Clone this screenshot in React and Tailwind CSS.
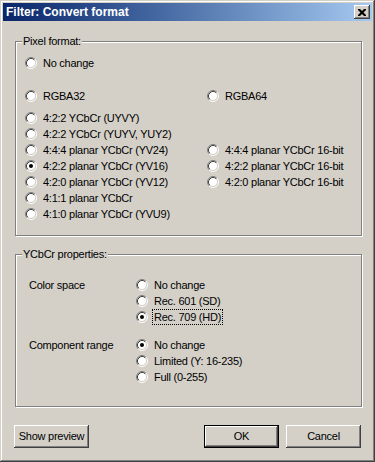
import React from "react";

const bevel =
  "shadow-[inset_-1px_-1px_#404040,inset_1px_1px_#ffffff,inset_-2px_-2px_#808080,inset_2px_2px_#d4d0c8]";

function Radio({ checked }) {
  return (
    <svg width="13" height="12" viewBox="0 0 13 12" className="shrink-0">
      <circle cx="6" cy="6" r="4.5" fill="#ffffff" />
      <path d="M2.11 9.89 A5.5 5.5 0 0 1 9.89 2.11" fill="none" stroke="#808080" />
      <path d="M9.89 2.11 A5.5 5.5 0 0 1 2.11 9.89" fill="none" stroke="#ffffff" />
      <path d="M2.82 9.18 A4.5 4.5 0 0 1 9.18 2.82" fill="none" stroke="#404040" />
      <path d="M9.18 2.82 A4.5 4.5 0 0 1 2.82 9.18" fill="none" stroke="#d4d0c8" />
      {checked && <circle cx="6" cy="6" r="2" fill="#000000" />}
    </svg>
  );
}

function Option({ label, checked, focused }) {
  return (
    <div className="flex items-center h-[16px] gap-[3px]">
      <Radio checked={checked} />
      <span
        className={
          focused
            ? "leading-[14px] px-[1px] border border-dotted border-black"
            : "leading-[14px] px-[1px] border border-transparent"
        }
      >
        {label}
      </span>
    </div>
  );
}

function Group({ title, className, children }) {
  return (
    <div
      className={
        "relative border border-[#808080] shadow-[1px_1px_0_#ffffff,inset_1px_1px_0_#ffffff] " +
        className
      }
    >
      <span className="absolute -top-[8px] left-[6px] bg-[#d4d0c8] px-[1px] leading-[14px]">
        {title}
      </span>
      {children}
    </div>
  );
}

function Button({ children, isDefault, className }) {
  return (
    <button
      className={
        "h-[23px] w-[75px] bg-[#d4d0c8] text-black text-[11px] " +
        (isDefault ? "border border-black " : "") +
        bevel +
        " " +
        (className || "")
      }
    >
      {children}
    </button>
  );
}

export default function App() {
  const rows = [
    ["4:2:2 YCbCr (UYVY)", null],
    ["4:2:2 YCbCr (YUYV, YUY2)", null],
    ["4:4:4 planar YCbCr (YV24)", "4:4:4 planar YCbCr 16-bit"],
    ["4:2:2 planar YCbCr (YV16)", "4:2:2 planar YCbCr 16-bit"],
    ["4:2:0 planar YCbCr (YV12)", "4:2:0 planar YCbCr 16-bit"],
    ["4:1:1 planar YCbCr", null],
    ["4:1:0 planar YCbCr (YVU9)", null],
  ];

  return (
    <div className="w-[375px] h-[462px] bg-[#d4d0c8] p-[3px] flex flex-col text-[11px] tracking-[-0.25px] text-black font-['Liberation_Sans',Arial,sans-serif] shadow-[inset_-1px_-1px_#404040,inset_1px_1px_#d4d0c8,inset_-2px_-2px_#808080,inset_2px_2px_#ffffff]">
      <div className="h-[18px] flex items-center justify-between pl-[3px] pr-[2px] bg-gradient-to-r from-[#0a246a] to-[#a6caf0]">
        <span className="text-white font-bold text-[12px] tracking-normal">Filter: Convert format</span>
        <button
          className={
            "w-[16px] h-[14px] bg-[#d4d0c8] flex items-center justify-center " + bevel
          }
        >
          <svg width="8" height="7" viewBox="0 0 8 7">
            <path
              d="M0 0h2l2 2 2-2h2v1l-2.5 2.5L8 6v1H6L4 5 2 7H0V6l2.5-2.5L0 1z"
              fill="#000000"
            />
          </svg>
        </button>
      </div>

      <div className="flex-1 pl-[12px] pr-[10px]">
        <Group title="Pixel format:" className="mt-[20px] h-[195px] pt-[13px] pl-[9px]">
          <Option label="No change" />
          <div className="grid grid-cols-[182px_1fr] mt-[17px]">
            <Option label="RGBA32" />
            <Option label="RGBA64" />
          </div>
          <div className="grid grid-cols-[182px_1fr] mt-[6px]">
            {rows.map(([left, right]) => (
              <React.Fragment key={left}>
                <Option label={left} checked={left === "4:2:2 planar YCbCr (YV16)"} />
                {right ? <Option label={right} /> : <div />}
              </React.Fragment>
            ))}
          </div>
        </Group>

        <Group title="YCbCr properties:" className="mt-[18px] h-[153px] pt-[22px] pl-[13px]">
          <div className="flex">
            <div className="w-[107px] h-[16px] flex items-center">Color space</div>
            <div className="flex flex-col">
              <Option label="No change" />
              <Option label="Rec. 601 (SD)" />
              <Option label="Rec. 709 (HD)" checked focused />
            </div>
          </div>
          <div className="flex mt-[12px]">
            <div className="w-[107px] h-[16px] flex items-center">Component range</div>
            <div className="flex flex-col">
              <Option label="No change" checked />
              <Option label="Limited (Y: 16-235)" />
              <Option label="Full (0-255)" />
            </div>
          </div>
        </Group>

        <div className="flex items-center mt-[18px] -ml-[1px]">
          <Button>Show preview</Button>
          <Button isDefault className="ml-auto">
            OK
          </Button>
          <Button className="ml-[7px] mr-[1px]">Cancel</Button>
        </div>
      </div>
    </div>
  );
}
